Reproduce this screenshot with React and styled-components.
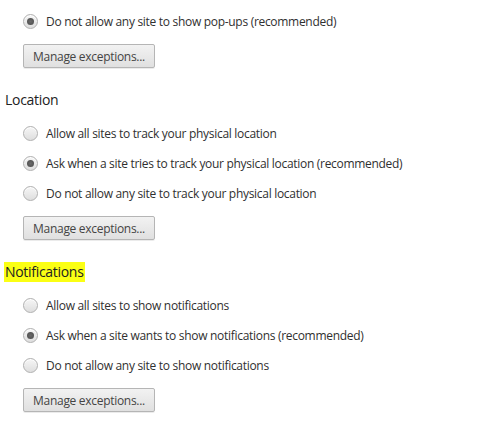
import React from 'react'
import styled, { createGlobalStyle } from 'styled-components'

const GlobalStyle = createGlobalStyle`
    html, body {
        margin: 0;
        background: #fff;
    }
    body {
        font-family: 'Open Sans', 'Noto Sans', sans-serif;
        color: #303030;
    }
`

const Page = styled.div`
    padding: 6px 0 0 5px;
    display: flex;
    flex-direction: column;
`

const Section = styled.section`
    display: flex;
    flex-direction: column;
    margin-bottom: 22px;
`

const Heading = styled.h3`
    margin: 0 0 8px -1px;
    padding: 0 1px;
    font-size: 14px;
    font-weight: 400;
    line-height: 20px;
    letter-spacing: -0.3px;
    color: #222;
    align-self: flex-start;
    background: ${props => props.highlight ? '#fbff14' : 'transparent'};
`

const Options = styled.div`
    display: flex;
    flex-direction: column;
    padding-left: 18px;
`

const Row = styled.label`
    display: flex;
    align-items: center;
    gap: 8px;
    height: 30px;
    font-size: 12px;
    letter-spacing: -0.3px;
`

const Radio = styled.span`
    box-sizing: border-box;
    width: 15px;
    height: 15px;
    border-radius: 50%;
    border: 1px solid #b0b0b0;
    background: linear-gradient(#f6f6f6, #dedede);
    box-shadow: inset 0 1px 0 #fff;
    display: flex;
    align-items: center;
    justify-content: center;
    &::after {
        content: '';
        width: 7px;
        height: 7px;
        border-radius: 50%;
        background: ${props => props.checked ? 'radial-gradient(#6a6a6a, #4a4a4a)' : 'transparent'};
    }
`

const Button = styled.button`
    align-self: flex-start;
    margin-top: 8px;
    height: 24px;
    width: 132px;
    padding: 0;
    font-family: inherit;
    font-size: 12px;
    letter-spacing: -0.3px;
    color: #444;
    border: 1px solid #b5b5b5;
    border-radius: 2px;
    background: linear-gradient(#f2f2f2, #e0e0e0);
    box-shadow: 0 1px 0 rgba(0, 0, 0, 0.08);
`

const sections = [
    {
        options: [{ text: 'Do not allow any site to show pop-ups (recommended)', checked: true }],
    },
    {
        title: 'Location',
        options: [
            { text: 'Allow all sites to track your physical location' },
            { text: 'Ask when a site tries to track your physical location (recommended)', checked: true },
            { text: 'Do not allow any site to track your physical location' },
        ],
    },
    {
        title: 'Notifications',
        highlight: true,
        options: [
            { text: 'Allow all sites to show notifications' },
            { text: 'Ask when a site wants to show notifications (recommended)', checked: true },
            { text: 'Do not allow any site to show notifications' },
        ],
    },
]

export default function App() {
    return (
        <Page>
            <GlobalStyle />
            {sections.map((section, i) => (
                <Section key={`section_${i}`}>
                    {section.title && <Heading highlight={section.highlight}>{section.title}</Heading>}
                    <Options>
                        {section.options.map((option, j) => (
                            <Row key={`option_${i}_${j}`}>
                                <Radio checked={option.checked} />
                                {option.text}
                            </Row>
                        ))}
                        <Button>Manage exceptions...</Button>
                    </Options>
                </Section>
            ))}
        </Page>
    )
}
